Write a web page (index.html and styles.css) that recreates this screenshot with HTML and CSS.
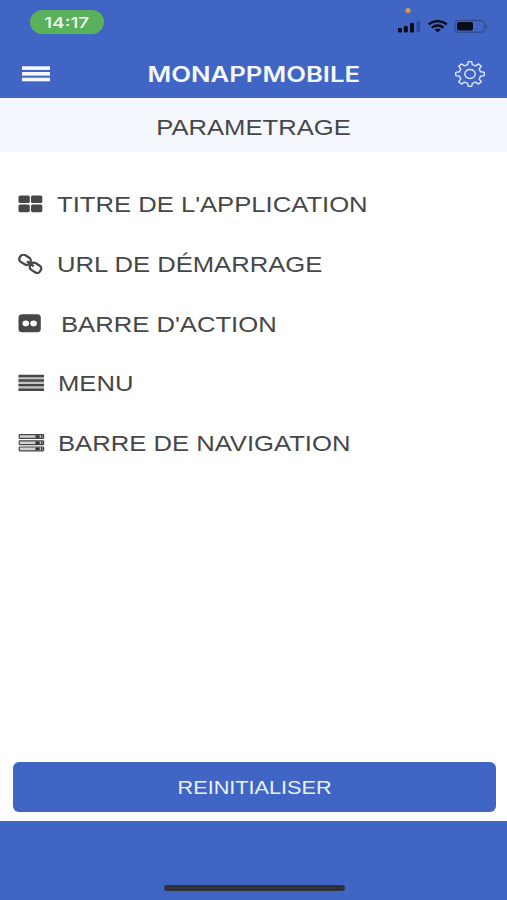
FILE: index.html
```html
<!DOCTYPE html>
<html lang="fr">
<head>
    <meta charset="UTF-8">
    <meta name="viewport" content="width=device-width, initial-scale=1.0">
    <title>MonAppMobile</title>
    <link rel="stylesheet" href="styles.css">
</head>
<body>

    <div class="header">
        <div class="status-bar">
            <div class="clock"><span>14:17</span></div>
            <!-- signal, wifi, battery -->
            <svg class="status-icons" width="96" height="34" viewBox="0 0 96 34">
                <circle cx="13" cy="10.5" r="2.6" fill="#d99a4e"/>
                <g fill="#080c18">
                    <rect x="3" y="28" width="4" height="4.4" rx="1"/>
                    <rect x="8.8" y="26" width="4" height="6.4" rx="1"/>
                    <rect x="15" y="23" width="4" height="9.4" rx="1"/>
                    <rect x="62" y="22" width="16" height="8.6" rx="1.8"/>
                    <path d="M39.6 29.6Q42.7 27.5 45.8 29.6L42.7 32.6Z"/>
                </g>
                <rect x="21.5" y="21" width="3.6" height="11.4" rx="1" fill="#2f4b96"/>
                <path d="M33.6 24.3Q42.7 17.5 51.8 24.3M36.8 27.6Q42.7 23.2 48.6 27.6" fill="none" stroke="#080c18" stroke-width="2.4"/>
                <rect x="60" y="20.4" width="29.6" height="11.8" rx="3.2" fill="none" stroke="#2d4686" stroke-width="1"/>
                <path d="M90.8 24.2Q94 26.3 90.8 28.4Z" fill="#2d4686"/>
            </svg>
        </div>
        <div class="nav-bar">
            <svg class="menu-icon" width="28" height="16" viewBox="0 0 28 16" fill="#f4f9ff">
                <rect width="28" height="3.6" y="0.3"/>
                <rect width="28" height="3.6" y="6"/>
                <rect width="28" height="3.6" y="11.7"/>
            </svg>
            <h1><span>MONAPPMOBILE</span></h1>
            <svg class="gear-icon" width="32" height="28" viewBox="0 0 32 28" fill="none" stroke="#dce9ff" stroke-width="1.4" stroke-linejoin="round">
                <path d="M13.7 4.7L14.3 1.6H17.7L18.3 4.7L21.6 5.8L24.6 3.9L27.3 6.3L25.2 8.9L26.5 11.8L30.3 12.4V15.6L26.5 16.2L25.2 19.1L27.3 21.7L24.6 24.1L21.6 22.2L18.3 23.3L17.7 26.4H14.3L13.7 23.3L10.4 22.2L7.4 24.1L4.7 21.7L6.8 19.1L5.5 16.2L1.7 15.6V12.4L5.5 11.8L6.8 8.9L4.7 6.3L7.4 3.9L10.4 5.8Z"/>
                <ellipse cx="16" cy="14" rx="5.2" ry="4.5"/>
            </svg>
        </div>
    </div>

    <div class="subtitle">
        <h2><span>PARAMETRAGE</span></h2>
    </div>

    <ul class="settings">
        <li class="setting">
            <svg width="39" height="20" viewBox="0 0 39 20" fill="#474747">
                <rect x="0.5" y="1.5" width="11.3" height="7.6" rx="1.6"/>
                <rect x="13" y="1.5" width="11.3" height="7.6" rx="1.6"/>
                <rect x="0.5" y="10.6" width="11.3" height="7.6" rx="1.6"/>
                <rect x="13" y="10.6" width="11.3" height="7.6" rx="1.6"/>
            </svg>
            <span>TITRE DE L'APPLICATION</span>
        </li>
        <li class="setting">
            <svg width="39" height="20" viewBox="0 0 39 20" fill="none" stroke="#474747" stroke-width="2.3">
                <rect x="1.3" y="1.8" width="11.4" height="8" rx="3.2" transform="rotate(32 7 5.8)"/>
                <rect x="11.8" y="9.8" width="11.4" height="8" rx="3.2" transform="rotate(32 17.5 13.8)"/>
                <path d="M8.8 7.4L15.7 12.2"/>
            </svg>
            <span>URL DE DÉMARRAGE</span>
        </li>
        <li class="setting wide">
            <svg width="39" height="20" viewBox="0 0 39 20">
                <rect x="0.5" y="1.3" width="22.3" height="18" rx="3.6" fill="#474747"/>
                <ellipse cx="7.8" cy="10.4" rx="3.3" ry="2.8" fill="#fff"/>
                <ellipse cx="15.6" cy="10.4" rx="3.3" ry="2.8" fill="#fff"/>
            </svg>
            <span>BARRE D'ACTION</span>
        </li>
        <li class="setting menu">
            <svg width="39" height="20" viewBox="0 0 39 20">
                <rect x="0.5" y="3" width="25.5" height="14" fill="#c4c4c4"/>
                <path d="M0.5 3H26M0.5 7.5H26M0.5 12.1H26M0.5 16.7H26" stroke="#474747" stroke-width="2.4"/>
            </svg>
            <span>MENU</span>
        </li>
        <li class="setting navigation">
            <svg width="39" height="20" viewBox="0 0 39 20">
                <g fill="#d0d0d0" stroke="#474747" stroke-width="1.2">
                    <rect x="1.2" y="1.6" width="24.4" height="3.8" rx="0.5"/>
                    <rect x="1.2" y="7.8" width="24.4" height="3.8" rx="0.5"/>
                    <rect x="1.2" y="14" width="24.4" height="3.8" rx="0.5"/>
                </g>
                <path d="M17.4 3.5H21.7M23 3.5H24.4M17.4 9.7H21.7M23 9.7H24.4M17.4 15.9H21.7M23 15.9H24.4" stroke="#333" stroke-width="2.6"/>
            </svg>
            <span>BARRE DE NAVIGATION</span>
        </li>
    </ul>

    <div class="actions">
        <button type="button"><span>REINITIALISER</span></button>
    </div>

    <div class="footer">
        <div class="home-indicator"></div>
    </div>

</body>
</html>
```
FILE: styles.css
```css
* {
    box-sizing: border-box;
}

body {
    display: flex;
    flex-direction: column;
    height: 900px;
    margin: 0;
    font-family: "Liberation Sans", Arial, sans-serif;
    background: #fff;
    color: #474747;
}

h1, h2 {
    margin: 0;
    font-weight: normal;
}

h1 span, h2 span, .clock span, .setting span, button span {
    display: inline-block;
    white-space: nowrap;
}

.header {
    height: 98px;
    background: #4065c5;
}

.status-bar {
    display: flex;
    justify-content: space-between;
    height: 50px;
    padding: 0 16px 0 30px;
}

.clock {
    width: 74px;
    height: 24px;
    margin-top: 10px;
    border-radius: 12px;
    background: #59b15c;
    color: #f4fff4;
    font-family: Inter, sans-serif;
    font-size: 15px;
    font-weight: 500;
    line-height: 25px;
    text-align: center;
}

.clock span {
    transform: scaleX(1.27);
}

.nav-bar {
    display: flex;
    align-items: center;
    justify-content: space-between;
    height: 48px;
    padding: 0 21px 0 22px;
}

h1 {
    padding-left: 4px;
    color: #f4f9ff;
    font-family: Inter, sans-serif;
    font-size: 21px;
    font-weight: 600;
}

h1 span {
    transform: scaleX(1.225);
}

.subtitle {
    height: 54px;
    padding-left: 1px;
    background: #f4f8fe;
    text-align: center;
}

h2 {
    font-size: 22px;
    line-height: 60px;
}

h2 span {
    transform: scaleX(1.165);
}

.settings {
    flex: 1;
    margin: 0;
    padding: 22px 18px 0;
    list-style: none;
}

.setting {
    display: flex;
    align-items: center;
    height: 59.8px;
    font-size: 22px;
}

.setting span {
    padding-top: 2px;
    transform: scaleX(1.165);
    transform-origin: left;
}

.wide span {
    margin-left: 4px;
    padding-top: 3px;
}

.menu span, .navigation span {
    margin-left: 1px;
}

.actions {
    padding: 0 11px 9px 13px;
}

button {
    display: block;
    width: 100%;
    height: 50px;
    padding: 2px 0 0;
    border: none;
    border-radius: 6px;
    background: #4065c5;
    color: #eaf2ff;
    font-family: inherit;
    font-size: 19px;
}

button span {
    transform: scaleX(1.14);
}

.footer {
    display: flex;
    align-items: flex-end;
    justify-content: center;
    height: 79px;
    padding: 0 0 9px 1px;
    background: #4065c5;
}

.home-indicator {
    width: 181px;
    height: 6px;
    border-radius: 3px;
    background: #30323a;
}
```
